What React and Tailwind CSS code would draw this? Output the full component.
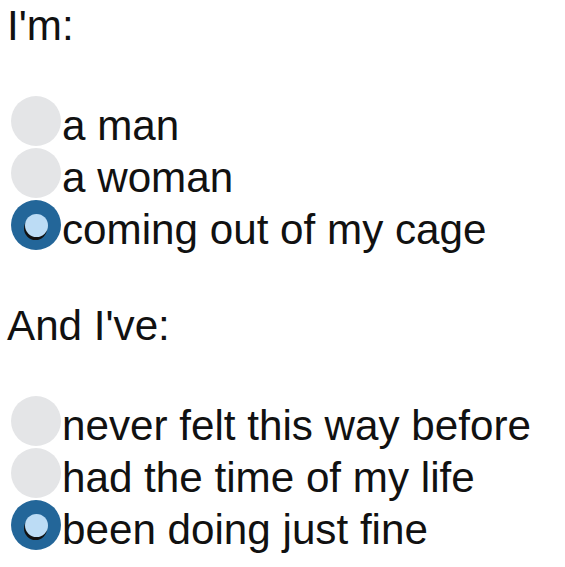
import React, { useState } from 'react';

const groups = [
  {
    label: "I'm:",
    name: 'who',
    options: ['a man', 'a woman', 'coming out of my cage'],
    initial: 2,
  },
  {
    label: "And I've:",
    name: 'been',
    options: ['never felt this way before', 'had the time of my life', 'been doing just fine'],
    initial: 2,
  },
];

const Radio = ({ checked, label, onSelect }) => (
  <label className="flex h-[52px] cursor-pointer items-start" onClick={onSelect}>
    <span
      className={`ml-[11px] flex h-[50px] w-[50px] shrink-0 items-center justify-center rounded-full ${
        checked ? 'bg-[#236699]' : 'bg-[#e4e5e7]'
      }`}
    >
      {checked && (
        <span className="h-[23px] w-[23px] rounded-full bg-[#bcdcf5] shadow-[-1px_3px_0_#111]" />
      )}
    </span>
    <span className="ml-[1px] h-[52px] whitespace-nowrap leading-[59px]">{label}</span>
  </label>
);

const Group = ({ label, options, initial }) => {
  const [selected, setSelected] = useState(initial);
  return (
    <div>
      <div className="h-[48px] pl-[7px] pt-[2px] leading-[48px]">{label}</div>
      <div className="mt-[48px]">
        {options.map((opt, i) => (
          <Radio key={opt} label={opt} checked={selected === i} onSelect={() => setSelected(i)} />
        ))}
      </div>
    </div>
  );
};

export default function App() {
  return (
    <div className="h-[567px] w-[565px] overflow-hidden bg-white text-[42.2px] text-[#111] [font-family:'Liberation_Sans',Arial,sans-serif]">
      <div className="flex flex-col gap-[48px]">
        {groups.map((g) => (
          <Group key={g.name} {...g} />
        ))}
      </div>
    </div>
  );
}
